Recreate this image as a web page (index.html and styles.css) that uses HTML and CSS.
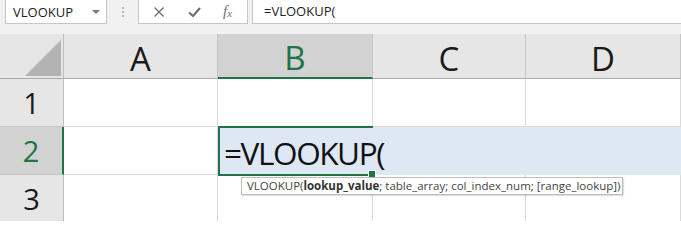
FILE: index.html
```html
<!DOCTYPE html>
<html>
<head>
<meta charset="utf-8">
<link rel="stylesheet" href="styles.css">
</head>
<body>
<div class="toolbar">
  <div class="namebox"><span class="nb-text">VLOOKUP</span><span class="caret"></span></div>
  <div class="grip"><i></i><i></i><i></i></div>
  <div class="fxbox">
    <svg class="ico" width="12" height="12" viewBox="0 0 12 12"><path d="M1.5 1.5 L10.5 10.5 M10.5 1.5 L1.5 10.5" stroke="#6e6e6e" stroke-width="1.4" fill="none"/></svg>
    <svg class="ico" width="13" height="12" viewBox="0 0 13 12"><path d="M1 6.5 L5 10 L12 2" stroke="#6e6e6e" stroke-width="2.2" fill="none" stroke-linejoin="miter"/></svg>
    <span class="fx">f<span class="fx-x">x</span></span>
  </div>
  <div class="formula">=VLOOKUP(</div>
</div>
<div class="sheet">
  <div class="corner"><svg width="36" height="36" viewBox="0 0 36 36"><polygon points="36,0 36,36 0,36" fill="#b3b3b3"/></svg></div>
  <div class="colh">A</div>
  <div class="colh colh-sel">B</div>
  <div class="colh">C</div>
  <div class="colh">D</div>

  <div class="rowh">1</div>
  <div class="cell"></div><div class="cell"></div><div class="cell"></div><div class="cell"></div>

  <div class="rowh rowh-sel">2</div>
  <div class="cell"></div>
  <div class="cell edit"><span class="edit-text">=VLOOKUP(</span><span class="frame"><span class="handle"></span></span></div>

  <div class="rowh">3</div>
  <div class="cell"></div><div class="cell"></div><div class="cell"></div><div class="cell"></div>

  <div class="tip">VLOOKUP(<b>lookup_value</b>; table_array; col_index_num; [range_lookup])</div>
</div>
</body>
</html>
```
FILE: styles.css
```css
html, body {
  margin: 0;
  padding: 0;
  background: #ffffff;
  overflow: hidden;
}
body {
  width: 681px;
  height: 221px;
  font-family: "Open Sans", "Noto Sans", sans-serif;
  color: #1f1f1f;
}
.toolbar {
  height: 34px;
  background: #f1f1f1;
  display: flex;
  align-items: flex-start;
}
.namebox {
  margin-left: 5px;
  width: 102px;
  height: 25px;
  margin-top: -1px;
  box-sizing: border-box;
  background: #fff;
  border: 1px solid #c6c6c6;
  display: flex;
  align-items: center;
  justify-content: space-between;
  padding: 0 6px 0 7px;
  font-size: 13px;
  color: #222;
}
.caret {
  width: 0;
  height: 0;
  border-left: 4px solid transparent;
  border-right: 4px solid transparent;
  border-top: 4px solid #7a7a7a;
}
.grip {
  width: 31px;
  height: 24px;
  display: flex;
  flex-direction: column;
  align-items: center;
  justify-content: center;
  gap: 2px;
}
.grip i {
  width: 2px;
  height: 2px;
  background: #b5b5b5;
}
.fxbox {
  width: 110px;
  height: 25px;
  margin-top: -1px;
  box-sizing: border-box;
  background: #fff;
  border: 1px solid #c6c6c6;
  display: flex;
  align-items: center;
  padding-left: 14px;
  gap: 23px;
}
.fx {
  font-family: "Liberation Serif", serif;
  font-style: italic;
  font-size: 15px;
  color: #6e6e6e;
  margin-left: -1px;
}
.fx-x {
  font-size: 11px;
  position: relative;
  top: 1px;
}
.formula {
  flex: 1;
  margin-left: 4px;
  height: 25px;
  margin-top: -1px;
  box-sizing: border-box;
  background: #fff;
  border: 1px solid #c6c6c6;
  border-right: none;
  padding-left: 11px;
  font-size: 13px;
  line-height: 23px;
  color: #222;
}
.sheet {
  position: relative;
  display: grid;
  grid-template-columns: 64px 154px 155px 153px 155px;
  grid-template-rows: 45px 48px 48px 48px;
}
.corner {
  background: #e6e6e6;
  border-right: 1px solid #bdbdbd;
  border-bottom: 1px solid #ababab;
  box-sizing: border-box;
  display: flex;
  align-items: flex-end;
  justify-content: flex-end;
  padding: 0 2px 2px 0;
}
.colh {
  background: #e6e6e6;
  border-right: 1px solid #c6c6c6;
  border-bottom: 1px solid #ababab;
  box-sizing: border-box;
  display: flex;
  align-items: center;
  justify-content: center;
  font-size: 33px;
  padding-top: 4px;
  color: #1a1a1a;
}
.colh-sel {
  background: #d2d2d2;
  color: #217346;
  border-bottom: 2px solid #217346;
}
.rowh {
  background: #e6e6e6;
  border-right: 1px solid #bdbdbd;
  border-bottom: 1px solid #c6c6c6;
  box-sizing: border-box;
  display: flex;
  align-items: center;
  justify-content: center;
  font-size: 29px;
  color: #1a1a1a;
}
.rowh-sel {
  background: #d2d2d2;
  color: #217346;
  border-right: 2px solid #217346;
}
.cell {
  border-right: 1px solid #dadada;
  border-bottom: 1px solid #dadada;
  box-sizing: border-box;
}
.edit {
  grid-column: 3 / 6;
  background: #dde8f4;
  border: none;
  position: relative;
  display: flex;
  align-items: center;
  padding-left: 6px;
}
.edit-text {
  font-size: 31.5px;
  letter-spacing: -1.4px;
  color: #111;
  padding-top: 3px;
}
.frame {
  position: absolute;
  left: 0;
  top: -1px;
  width: 155px;
  height: 50px;
  box-sizing: border-box;
  border-top: 2px solid #217346;
  border-left: 2px solid #217346;
  border-bottom: 2px solid #217346;
}
.handle {
  position: absolute;
  right: -3px;
  bottom: -4px;
  width: 6px;
  height: 6px;
  background: #217346;
  border: 1px solid #fff;
}
.tip {
  position: absolute;
  left: 241px;
  top: 143px;
  width: 382px;
  height: 18px;
  box-sizing: border-box;
  background: #fff;
  border: 1px solid #bdbdbd;
  box-shadow: 1px 1px 1px rgba(0,0,0,0.12);
  font-size: 11.5px;
  line-height: 16px;
  padding-left: 5px;
  color: #444;
  white-space: nowrap;
}
.tip b {
  color: #333;
}
```
